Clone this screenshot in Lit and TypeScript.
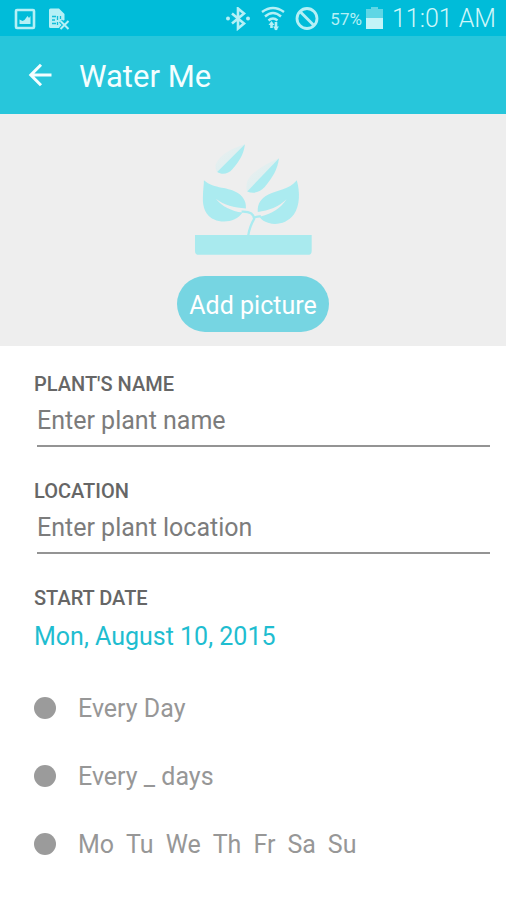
import { LitElement, html, css } from "lit";
import { customElement, state } from "lit/decorators.js";

const DAYS = ["Mo", "Tu", "We", "Th", "Fr", "Sa", "Su"];

@customElement("status-bar")
class StatusBar extends LitElement {
  static styles = css`
    :host {
      display: flex;
      align-items: center;
      box-sizing: border-box;
      height: 36px;
      padding: 2px 10px 0 14px;
      background: #00bcd9;
      color: #b5f0f6;
      font-size: 17px;
    }
    svg {
      display: block;
      flex: none;
    }
    .left {
      display: flex;
      gap: 12px;
      flex: 1;
    }
    .right {
      display: flex;
      align-items: center;
    }
    .icons {
      display: flex;
      align-items: center;
      gap: 10px;
      margin-right: 11px;
    }
    .battery {
      margin: 0 9px 0 4px;
    }
    .time {
      font-size: 25px;
      font-weight: 300;
      color: #d0f7fa;
      line-height: 34px;
      white-space: nowrap;
    }
  `;

  render() {
    return html`
      <div class="left">
        <svg width="22" height="22" viewBox="0 0 22 22" aria-label="Screenshot">
          <rect x="2" y="2" width="18" height="18" rx="1" fill="none" stroke="currentColor" stroke-width="2.6" />
          <path d="M5.5 16V11.500l3 1.500 2 -1 3-4 1.500 2 1.500-2v8z" fill="currentColor" />
        </svg>
        <svg width="22" height="22" viewBox="0 0 22 22" aria-label="SIM card error">
          <path d="M2.500 0.500h8.500l5.500 5.500v6l-2 1 1 3-3 4h-10q-1.500 0-1.500-1.500v-16.500Q1 0.500 2.500 0.500z" fill="currentColor" />
          <path d="M4 8.500h4M4 12h3M4 15.500h4M9.500 8v4M12.500 8v3M9.500 14v3" stroke="#12bdd8" stroke-width="1.300" />
          <path d="M12.500 13l8 8M20.500 13l-8 8" stroke="#00bcd9" stroke-width="4" />
          <path d="M12.500 13l8 8M20.500 13l-8 8" stroke="currentColor" stroke-width="2" />
        </svg>
      </div>
      <div class="right">
        <div class="icons">
          <svg width="26" height="24" viewBox="0 0 26 24" aria-label="Bluetooth">
            <path d="M7 6.500l12 10-6 5V1.500l6 5-12 10" fill="none" stroke="currentColor" stroke-width="2.600" />
            <circle cx="3" cy="11.500" r="2" fill="currentColor" />
            <circle cx="23" cy="11.500" r="2" fill="currentColor" />
          </svg>
          <svg width="24" height="26" viewBox="0 0 24 26" aria-label="Wi-Fi">
            <g fill="none" stroke="currentColor" stroke-width="2.400">
              <path d="M1 6Q12-2 23 6M4 10.500q8-7 16 0M7.500 14.500q4.500-4 9 0" />
              <path d="M10.500 22v-5M15 16v8" stroke-width="2.600" />
            </g>
            <path d="M7.500 19l3-4 3 4zM12 20.500l3 4 3-4z" fill="currentColor" />
          </svg>
          <svg width="24" height="24" viewBox="0 0 24 24" aria-label="Blocking mode">
            <circle cx="12" cy="11.500" r="10" fill="none" stroke="currentColor" stroke-width="2.800" />
            <path d="M5 4.500l14 14" stroke="currentColor" stroke-width="2.800" />
          </svg>
        </div>
        <span>57%</span>
        <svg class="battery" width="17" height="24" viewBox="0 0 17 24" aria-label="Battery">
          <path d="M5 0h7v2h5v9H0V2h5z" fill="#5fd6e5" />
          <path d="M0 11h17v11H0z" fill="#c4f4f8" />
        </svg>
        <span class="time">11:01 AM</span>
      </div>
    `;
  }
}

@customElement("app-root")
class AppRoot extends LitElement {
  @state() private schedule = "";
  @state() private days: string[] = [];

  static styles = css`
    :host {
      display: block;
      min-height: 100vh;
      background: #fff;
      font-family: Roboto, "Noto Sans", sans-serif;
    }
    button,
    input {
      font: inherit;
      border: 0;
      margin: 0;
      padding: 0;
      background: none;
    }
    svg {
      display: block;
    }
    .bar {
      display: flex;
      align-items: center;
      gap: 23px;
      height: 78px;
      padding: 0 24px;
      background: #27c6db;
      color: #f4feff;
    }
    h1 {
      margin: 0;
      padding-top: 2px;
      font-size: 31px;
      font-weight: 400;
    }
    .back {
      color: inherit;
    }
    .photo {
      display: flex;
      flex-direction: column;
      align-items: center;
      gap: 20px;
      padding: 29px 0 14px;
      background: #eee;
    }
    .add {
      height: 56px;
      padding: 3px 12px 0;
      border-radius: 28px;
      background: #76d5e2;
      color: #fff;
      font-size: 25px;
    }
    form {
      display: flex;
      flex-direction: column;
      padding: 26px 16px 24px 34px;
    }
    .field {
      display: flex;
      flex-direction: column;
      margin-bottom: 32px;
    }
    .field:last-of-type {
      margin-bottom: 28px;
    }
    .caption {
      font-size: 20px;
      line-height: 24px;
      font-weight: 500;
      color: #666;
    }
    .text {
      height: 51px;
      margin-left: 3px;
      box-sizing: border-box;
      border-bottom: 2px solid #949494;
      border-radius: 0;
      outline: none;
      font-size: 25px;
      color: #444;
    }
    .text::placeholder {
      color: #7c7c7c;
      opacity: 1;
    }
    .date {
      align-self: flex-start;
      height: 52px;
      font-size: 25px;
      color: #1fbdd0;
    }
    fieldset {
      display: flex;
      flex-direction: column;
      gap: 32px;
      margin: 0;
      padding: 0;
      border: 0;
    }
    .option {
      display: flex;
      align-items: center;
      gap: 22px;
      font-size: 25px;
      line-height: 36px;
      color: #979797;
    }
    .dot {
      appearance: none;
      flex: none;
      width: 22px;
      height: 22px;
      border-radius: 50%;
      background: #9b9b9b;
    }
    .dot:checked {
      background: #27c6db;
    }
    .option label,
    .days {
      padding-top: 2px;
    }
    .option {
      height: 36px;
    }
    .days {
      display: flex;
      gap: 12px;
    }
    .day {
      color: inherit;
    }
    .day[aria-pressed="true"] {
      color: #1fbdd0;
    }
  `;

  private toggle(day: string) {
    this.schedule = "weekdays";
    this.days = this.days.includes(day)
      ? this.days.filter((d) => d !== day)
      : [...this.days, day];
  }

  private radio(value: string, label: string) {
    return html`<input
      class="dot"
      type="radio"
      name="schedule"
      id=${value}
      aria-label=${label}
      .checked=${this.schedule === value}
      @change=${() => (this.schedule = value)}
    />`;
  }

  render() {
    return html`
      <status-bar></status-bar>
      <header class="bar">
        <button class="back" aria-label="Back">
          <svg width="32" height="32" viewBox="0 0 32 32" fill="none" stroke="currentColor" stroke-width="3">
            <path d="M27.500 16H7M17 5.800L6.800 16 17 26.200" />
          </svg>
        </button>
        <h1>Water Me</h1>
      </header>
      <section class="photo">
        <svg width="118" height="113" viewBox="103 37 357 339" aria-hidden="true">
          <defs>
            <linearGradient id="shine" x1="0" y1="0" x2="1" y2="1">
              <stop offset="0" stop-color="#eee" />
              <stop offset="1" stop-color="#d3f0f2" />
            </linearGradient>
          </defs>
          <path d="M257 39Q178 64 168 104q-1 12 5 20z" fill="url(#shine)" />
          <path d="M257 39L173 123c14 9 34 7 46-8 20-24 34-43 38-76z" fill="#abebf0" />
          <path d="M360 82Q277 118 264 152q-5 18 0 30z" fill="url(#shine)" />
          <path d="M360 82L264 182c18 8 38 4 53-13 25-31 39-53 43-87z" fill="#abebf0" />
          <path d="M133 148c31 28 76 18 106 41 16 12 22 27 21 45-36-5-65-9-91-30 19 24 47 37 81 42-14 20-37 29-64 27-43-6-58-36-56-75 0-20 3-36 3-50z" fill="#abebf0" />
          <path d="M414 148c10 36 10 76-9 104-24 32-66 35-92 19q-7-4-12-12c40-9 63-25 82-53-23 22-54 35-87 38-2-23 9-42 32-53 27-13 62-14 86-43z" fill="#abebf0" />
          <path d="M247 243c24-1 37 6 38 22-9 15-15 31-18 51M283 263c5-5 12-5 22-6" fill="none" stroke="#abebf0" stroke-width="7" />
          <path d="M106 314h353v48q0 12-12 12H118q-12 0-12-12z" fill="#a9eaee" />
        </svg>
        <button class="add">Add picture</button>
      </section>
      <form @submit=${(e: Event) => e.preventDefault()}>
        <div class="field">
          <label class="caption" for="plant">PLANT'S NAME</label>
          <input class="text" id="plant" type="text" placeholder="Enter plant name" />
        </div>
        <div class="field">
          <label class="caption" for="location">LOCATION</label>
          <input class="text" id="location" type="text" placeholder="Enter plant location" />
        </div>
        <div class="field">
          <label class="caption" for="start">START DATE</label>
          <button class="date" id="start" type="button">Mon, August 10, 2015</button>
        </div>
        <fieldset aria-label="Schedule">
          <div class="option">
            ${this.radio("daily", "Every Day")}
            <label for="daily">Every Day</label>
          </div>
          <div class="option">
            ${this.radio("interval", "Every _ days")}
            <label for="interval">Every _ days</label>
          </div>
          <div class="option">
            ${this.radio("weekdays", "Days of the week")}
            <div class="days">
              ${DAYS.map(
                (day) => html`<button
                  class="day"
                  type="button"
                  aria-pressed=${this.days.includes(day) ? "true" : "false"}
                  @click=${() => this.toggle(day)}
                >${day}</button>`
              )}
            </div>
          </div>
        </fieldset>
      </form>
    `;
  }
}
